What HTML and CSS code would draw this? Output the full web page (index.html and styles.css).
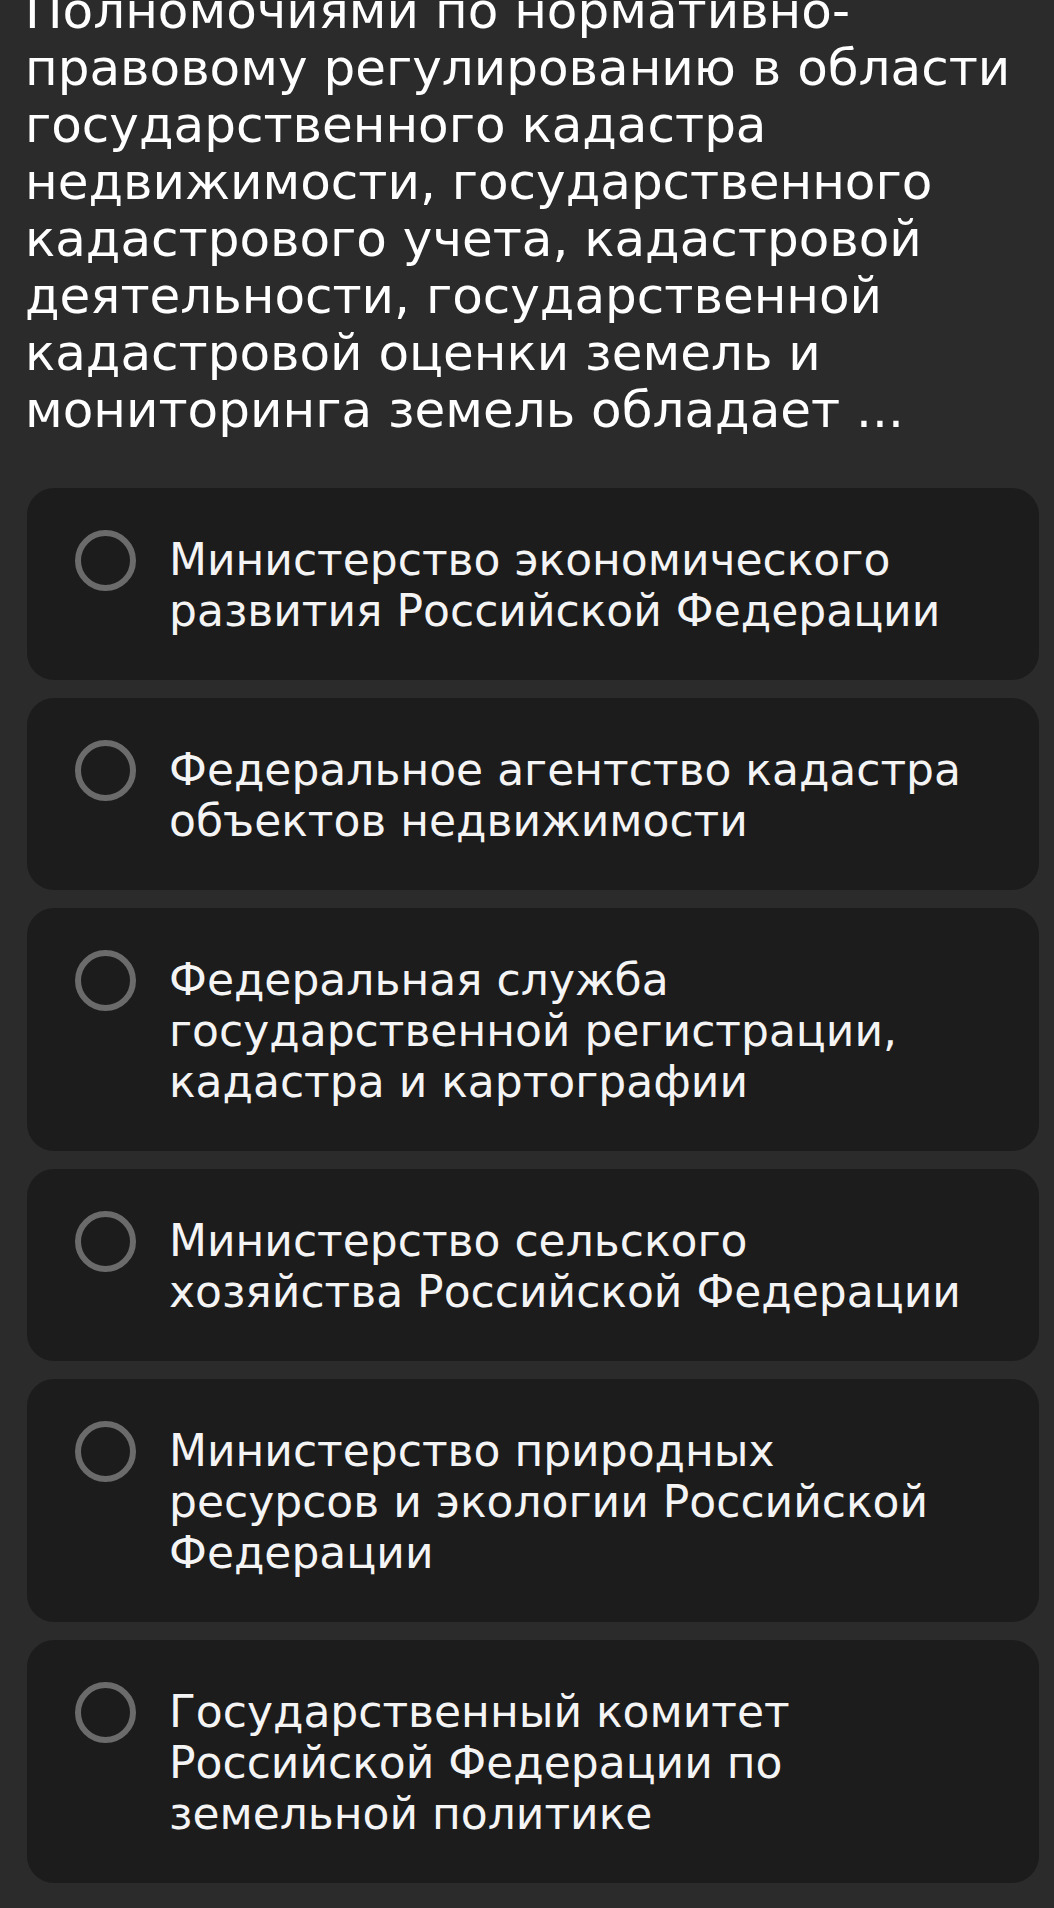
FILE: index.html
```html
<!DOCTYPE html>
<html lang="ru">
<head>
<meta charset="utf-8">
<title>Вопрос</title>
<link rel="stylesheet" href="styles.css">
</head>
<body>
<main class="page">
  <h1 class="question">Полномочиями по нормативно-<br>правовому регулированию в области<br>государственного кадастра<br>недвижимости, государственного<br>кадастрового учета, кадастровой<br>деятельности, государственной<br>кадастровой оценки земель и<br>мониторинга земель обладает ...</h1>
  <ul class="options">
    <li class="option"><span class="radio"></span><span class="label">Министерство экономического<br>развития Российской Федерации</span></li>
    <li class="option"><span class="radio"></span><span class="label">Федеральное агентство кадастра<br>объектов недвижимости</span></li>
    <li class="option"><span class="radio"></span><span class="label">Федеральная служба<br>государственной регистрации,<br>кадастра и картографии</span></li>
    <li class="option"><span class="radio"></span><span class="label">Министерство сельского<br>хозяйства Российской Федерации</span></li>
    <li class="option"><span class="radio"></span><span class="label">Министерство природных<br>ресурсов и экологии Российской<br>Федерации</span></li>
    <li class="option"><span class="radio"></span><span class="label">Государственный комитет<br>Российской Федерации по<br>земельной политике</span></li>
  </ul>
</main>
</body>
</html>
```
FILE: styles.css
```css
html, body {
  margin: 0;
  padding: 0;
  background: #2b2b2b;
}
body {
  width: 1054px;
  height: 1908px;
  overflow: hidden;
  font-family: "DejaVu Sans", "Noto Sans", sans-serif;
  color: #ffffff;
}
.page {
  padding: 0 15px 0 27px;
}
.question {
  margin: -17px 0 0 -2px;
  font-size: 50px;
  line-height: 57px;
  font-weight: normal;
  color: #ffffff;
}
.options {
  list-style: none;
  margin: 49px 0 0 0;
  padding: 0;
  display: flex;
  flex-direction: column;
  gap: 18px;
}
.option {
  display: flex;
  align-items: flex-start;
  gap: 33px;
  background: #1c1c1c;
  border-radius: 27px;
  padding: 46px 30px 44px 48px;
}
.radio {
  flex: 0 0 auto;
  width: 61px;
  height: 61px;
  margin-top: -4px;
  box-sizing: border-box;
  border: 6px solid #6b6b6b;
  border-radius: 50%;
}
.label {
  font-size: 44px;
  line-height: 51px;
  color: #f4f4f4;
}
```
